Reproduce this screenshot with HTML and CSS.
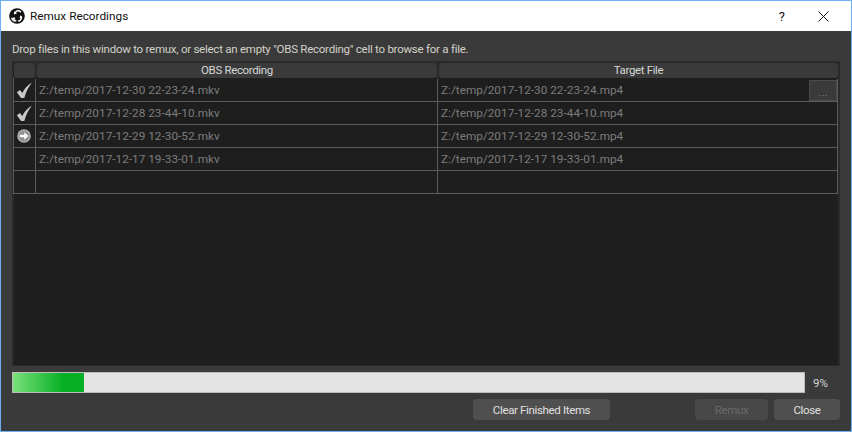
FILE: index.html
```html
<!DOCTYPE html>
<html lang="en">
<head>
<meta charset="utf-8">
<title>Remux Recordings</title>
<link rel="stylesheet" href="styles.css">
</head>
<body>
<div class="window">
  <header class="titlebar">
    <svg class="logo" viewBox="0 0 16 16" aria-hidden="true">
      <circle cx="8" cy="8" r="7.800" fill="#111"/>
      <g fill="none" stroke="#fff" stroke-width="1.500" stroke-linecap="round">
        <path d="M11.500 3.800a3.200 3.200 0 0 0-5 .5"/>
        <path d="M9.800 13a3.200 3.200 0 0 0 2.200-4.500"/>
        <path d="M2.900 10.200a3.200 3.200 0 0 0 3.900 2.600"/>
      </g>
      <g fill="#fff">
        <path d="M5 6.500a3.400 3.400 0 0 1 1-3.400l1.800 2.300z"/>
        <path d="M11.400 7.500a3.400 3.400 0 0 1 2 2.800l-2.900-.4z"/>
        <path d="M6.500 11.500a3.400 3.400 0 0 1-3.400-.8l2.300-1.800z"/>
      </g>
    </svg>
    <span class="title">Remux Recordings</span>
    <span class="help">?</span>
    <svg class="close-x" viewBox="0 0 11 11" aria-hidden="true"><path d="M.5.5l10 10M10.500.5l-10 10" stroke="#111" stroke-width="1" fill="none"/></svg>
  </header>
  <main class="content">
    <p class="hint">Drop files in this window to remux, or select an empty "OBS Recording" cell to browse for a file.</p>
    <section class="table">
      <div class="head">
        <div class="hcell hcell-icon"></div>
        <div class="hcell hcell-a">OBS Recording</div>
        <div class="hcell hcell-b">Target File</div>
      </div>
      <div class="rows">
        <div class="row">
          <div class="cell cell-icon">
            <svg class="check" viewBox="0 0 17 17" aria-hidden="true"><path d="M.8 10.200l3.200-2.300l2.300 3.100c2-4.300 5-7.700 9.700-10.500c-3.200 3.900-6 9.200-7.700 15.500h-3.300z" fill="#c8c8c8"/></svg>
          </div>
          <div class="cell cell-a">Z:/temp/2017-12-30 22-23-24.mkv</div>
          <div class="cell cell-b">Z:/temp/2017-12-30 22-23-24.mp4<span class="browse">...</span></div>
        </div>
        <div class="row">
          <div class="cell cell-icon">
            <svg class="check" viewBox="0 0 17 17" aria-hidden="true"><path d="M.8 10.200l3.200-2.300l2.300 3.100c2-4.300 5-7.700 9.700-10.500c-3.200 3.900-6 9.200-7.700 15.500h-3.300z" fill="#c8c8c8"/></svg>
          </div>
          <div class="cell cell-a">Z:/temp/2017-12-28 23-44-10.mkv</div>
          <div class="cell cell-b">Z:/temp/2017-12-28 23-44-10.mp4</div>
        </div>
        <div class="row">
          <div class="cell cell-icon">
            <svg class="arrow" viewBox="0 0 14 14" aria-hidden="true"><circle cx="7" cy="7" r="6.800" fill="#b0b0b0"/><circle cx="7" cy="7" r="5.200" fill="#909090"/><path d="M2.800 5.800h4.400V3.200L11.400 7l-4.200 3.800V8.200H2.800z" fill="#fff"/></svg>
          </div>
          <div class="cell cell-a">Z:/temp/2017-12-29 12-30-52.mkv</div>
          <div class="cell cell-b">Z:/temp/2017-12-29 12-30-52.mp4</div>
        </div>
        <div class="row">
          <div class="cell cell-icon"></div>
          <div class="cell cell-a">Z:/temp/2017-12-17 19-33-01.mkv</div>
          <div class="cell cell-b">Z:/temp/2017-12-17 19-33-01.mp4</div>
        </div>
        <div class="row">
          <div class="cell cell-icon"></div>
          <div class="cell cell-a"></div>
          <div class="cell cell-b"></div>
        </div>
      </div>
    </section>
    <div class="progress-line">
      <div class="progress"><div class="chunk" style="width:9%"></div></div>
      <span class="percent">9%</span>
    </div>
    <div class="buttons">
      <button class="btn btn-clear" type="button">Clear Finished Items</button>
      <button class="btn btn-remux" type="button" disabled>Remux</button>
      <button class="btn btn-close" type="button">Close</button>
    </div>
  </main>
</div>
</body>
</html>
```
FILE: styles.css
```css
* { box-sizing: border-box; }
html, body { margin: 0; padding: 0; }
body { width: 852px; height: 432px; overflow: hidden; font-family: Roboto, "Noto Sans", sans-serif; font-size: 11.5px; }
.window { width: 852px; height: 432px; display: flex; flex-direction: column; border: 1px solid #6db1f2; background: #3a3a3a; }
.titlebar { height: 30px; flex: none; background: #fff; display: flex; align-items: center; color: #111; padding-left: 8px; }
.logo { width: 16px; height: 16px; flex: none; }
.title { margin-left: 5px; font-size: 11.8px; }
.help { margin-left: auto; font-size: 13px; margin-right: 33px; }
.close-x { width: 11px; height: 11px; margin-right: 22px; }
.content { flex: 1; display: flex; flex-direction: column; padding: 0 11px 11px; min-height: 0; }
.hint { margin: 10px 0 0; height: 20px; line-height: 16px; color: #d2d2c8; white-space: nowrap; letter-spacing: -0.25px; }
.table { height: 305px; flex: none; background: #1e1e1e; border: 2px solid #2a2a2a; border-bottom-width: 1px; color: #7c7c7c; }
.head { display: flex; height: 15px; background: #2a2a2a; gap: 2px; }
.hcell { background: #3a3a3a; border-radius: 4px; color: #d6d6d6; text-align: center; line-height: 15px; white-space: nowrap; letter-spacing: -0.35px; }
.hcell-icon { width: 21px; }
.hcell-a { width: 400px; }
.hcell-b { flex: 1; }
.rows { border-left: 1px solid #5c5c5c; margin-left: -1px; padding-top: 1px; }
.row { display: flex; height: 23px; border-bottom: 1px solid #5c5c5c; }
.cell { height: 22px; line-height: 23px; border-right: 1px solid #5c5c5c; white-space: nowrap; font-size: 11.8px; }
.cell-icon { width: 22px; display: flex; align-items: center; justify-content: center; padding-right: 1px; }
.cell-a { width: 402px; padding-left: 3px; }
.cell-b { flex: 1; padding-left: 3px; display: flex; justify-content: space-between; }
.check { width: 17px; height: 17px; flex: none; }
.arrow { width: 14px; height: 14px; }
.browse { width: 28px; height: 21px; margin-top: 1px; background: #3a3a3a; border: 1px solid #4a4a4a; line-height: 22px; text-align: center; color: #777; }
.progress-line { display: flex; align-items: center; margin-top: 6px; height: 21px; }
.progress { width: 793px; height: 21px; background: #e4e4e4; border: 1px solid #bcbcbc; }
.chunk { height: 100%; background: linear-gradient(90deg, #7be07b 0%, #06b025 70%, #06b025 100%); }
.percent { margin-left: 8px; color: #d6d6d6; }
.buttons { display: flex; margin-top: 6px; justify-content: flex-end; gap: 6px; }
.btn { height: 21px; border: 0; border-radius: 4px; background: #4f4f4f; color: #e0e0e0; font: inherit; padding: 0; letter-spacing: -0.35px; }
.btn-clear { width: 137px; margin-right: 79px; }
.btn-remux { width: 73px; background: #484848; color: #6a6a6a; }
.btn-close { width: 66px; }
```
